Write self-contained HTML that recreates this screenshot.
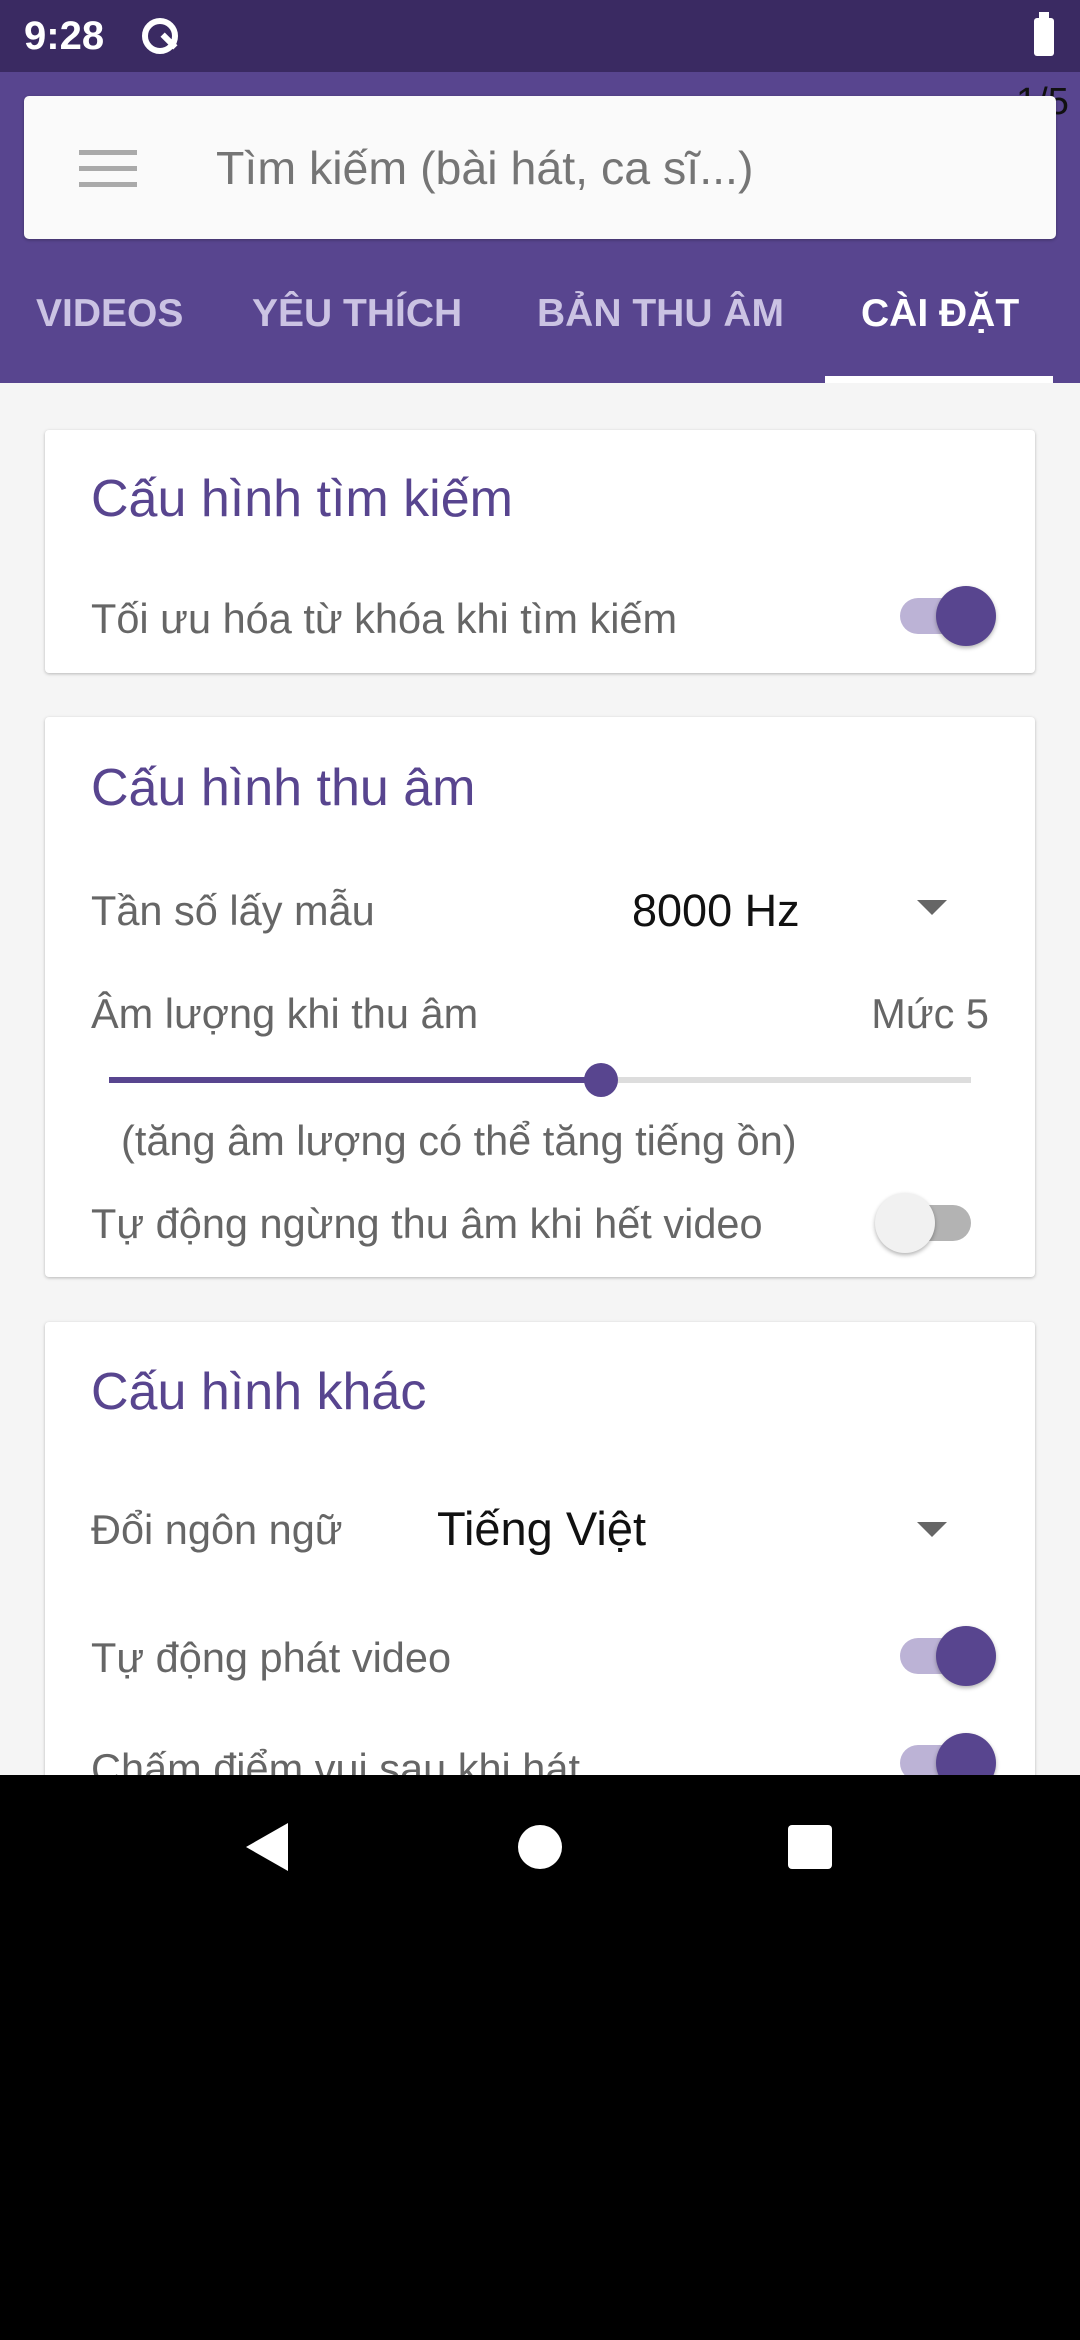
<!DOCTYPE html>
<html><head><meta charset="utf-8"><style>
*{margin:0;padding:0;box-sizing:border-box}
body{width:1080px;height:2340px;position:relative;background:#000;font-family:"Liberation Sans",sans-serif;overflow:hidden}
.a{position:absolute;white-space:nowrap}
.t{position:absolute;white-space:nowrap;line-height:60px;height:60px}
.card{position:absolute;left:45px;width:990px;background:#fff;border-radius:4px;box-shadow:0 1px 3px rgba(0,0,0,.25)}
.title{color:#58458f;font-size:52px}
.lab{color:#666;font-size:41.5px}
.sw{position:absolute;width:86px;height:60px}
.sw .tr{position:absolute;left:0;top:12px;width:86px;height:36px;border-radius:18px}
.sw .th{position:absolute;top:0;width:60px;height:60px;border-radius:50%;box-shadow:0 2px 4px rgba(0,0,0,.3)}
.tri{position:absolute;width:0;height:0;border-left:15px solid transparent;border-right:15px solid transparent;border-top:15px solid #666}
</style></head><body>
<div class="a" style="left:0;top:0;width:1080px;height:72px;background:#3a2a62"></div>
<div class="t" style="left:24px;top:6px;color:#fff;font-size:40px;font-weight:bold">9:28</div>
<div class="a" style="left:142px;top:18px;width:36px;height:36px;border:6px solid #fff;border-radius:50%"></div>
<div class="a" style="left:160px;top:38px;width:18px;height:6px;background:#fff;transform:rotate(45deg)"></div>
<div class="a" style="left:1034px;top:18px;width:20px;height:38px;background:#fff;border-radius:3px"></div>
<div class="a" style="left:1039px;top:12px;width:10px;height:6px;background:#fff"></div>
<div class="a" style="left:0;top:72px;width:1080px;height:311px;background:#58458f"></div>
<div class="t" style="left:1016px;top:72px;color:#111;font-size:38px">1/5</div>
<div class="a" style="left:24px;top:96px;width:1032px;height:143px;background:#fafafa;border-radius:5px;box-shadow:0 1px 3px rgba(0,0,0,.3)"></div>
<div class="a" style="left:79px;top:150px;width:58px;height:5px;background:#aaa"></div>
<div class="a" style="left:79px;top:166px;width:58px;height:5px;background:#aaa"></div>
<div class="a" style="left:79px;top:182px;width:58px;height:5px;background:#aaa"></div>
<div class="t" style="left:216px;top:138px;color:#757575;font-size:46.5px">Tìm kiếm (bài hát, ca sĩ...)</div>
<div class="t" style="left:36px;top:284px;color:#cbc3e3;font-size:39px;font-weight:bold">VIDEOS</div>
<div class="t" style="left:252px;top:284px;color:#cbc3e3;font-size:39px;font-weight:bold">YÊU THÍCH</div>
<div class="t" style="left:537px;top:284px;color:#cbc3e3;font-size:39px;font-weight:bold">BẢN THU ÂM</div>
<div class="t" style="left:861px;top:284px;color:#fff;font-size:39px;font-weight:bold">CÀI ĐẶT</div>
<div class="a" style="left:825px;top:376px;width:228px;height:7px;background:#fff"></div>
<div class="a" style="left:0;top:383px;width:1080px;height:1392px;background:#f5f5f5;overflow:hidden">
 <div class="card" style="top:47px;height:243px">
  <div class="t title" style="left:46px;top:39px">Cấu hình tìm kiếm</div>
  <div class="t lab" style="left:46px;top:159px">Tối ưu hóa từ khóa khi tìm kiếm</div>
  <div class="sw" style="left:855px;top:156px"><div class="tr" style="background:#bcb3d6"></div><div class="th" style="left:36px;background:#58458f"></div></div>
 </div>
 <div class="card" style="top:334px;height:560px">
  <div class="t title" style="left:46px;top:41px">Cấu hình thu âm</div>
  <div class="t lab" style="left:46px;top:164px">Tần số lấy mẫu</div>
  <div class="t" style="left:587px;top:164px;color:#111;font-size:45px">8000 Hz</div>
  <div class="tri" style="left:872px;top:183px"></div>
  <div class="t lab" style="left:46px;top:267px">Âm lượng khi thu âm</div>
  <div class="t lab" style="right:46px;top:267px">Mức 5</div>
  <div class="a" style="left:64px;top:360px;width:492px;height:6px;background:#58458f"></div>
  <div class="a" style="left:556px;top:360px;width:370px;height:6px;background:#ddd"></div>
  <div class="a" style="left:539px;top:346px;width:34px;height:34px;border-radius:50%;background:#58458f"></div>
  <div class="t lab" style="left:76px;top:394px">(tăng âm lượng có thể tăng tiếng ồn)</div>
  <div class="t lab" style="left:46px;top:477px">Tự động ngừng thu âm khi hết video</div>
  <div class="sw" style="left:840px;top:476px"><div class="tr" style="background:#b3b3b3"></div><div class="th" style="left:-10px;background:#f1f1f1"></div></div>
 </div>
 <div class="card" style="top:939px;height:600px">
  <div class="t title" style="left:46px;top:40px">Cấu hình khác</div>
  <div class="t lab" style="left:46px;top:178px">Đổi ngôn ngữ</div>
  <div class="t" style="left:392px;top:177px;color:#111;font-size:47px">Tiếng Việt</div>
  <div class="tri" style="left:872px;top:200px"></div>
  <div class="t lab" style="left:46px;top:306px">Tự động phát video</div>
  <div class="sw" style="left:855px;top:304px"><div class="tr" style="background:#bcb3d6"></div><div class="th" style="left:36px;background:#58458f"></div></div>
  <div class="t lab" style="left:46px;top:417px">Chấm điểm vui sau khi hát</div>
  <div class="sw" style="left:855px;top:411px"><div class="tr" style="background:#bcb3d6"></div><div class="th" style="left:36px;background:#58458f"></div></div>
 </div>
</div>
<svg class="a" style="left:0;top:1775px" width="1080" height="140">
 <polygon points="288,48 288,96 246,72" fill="#fff"/>
 <circle cx="540" cy="72" r="22" fill="#fff"/>
 <rect x="788" y="50" width="44" height="44" rx="4" fill="#fff"/>
</svg>
</body></html>
